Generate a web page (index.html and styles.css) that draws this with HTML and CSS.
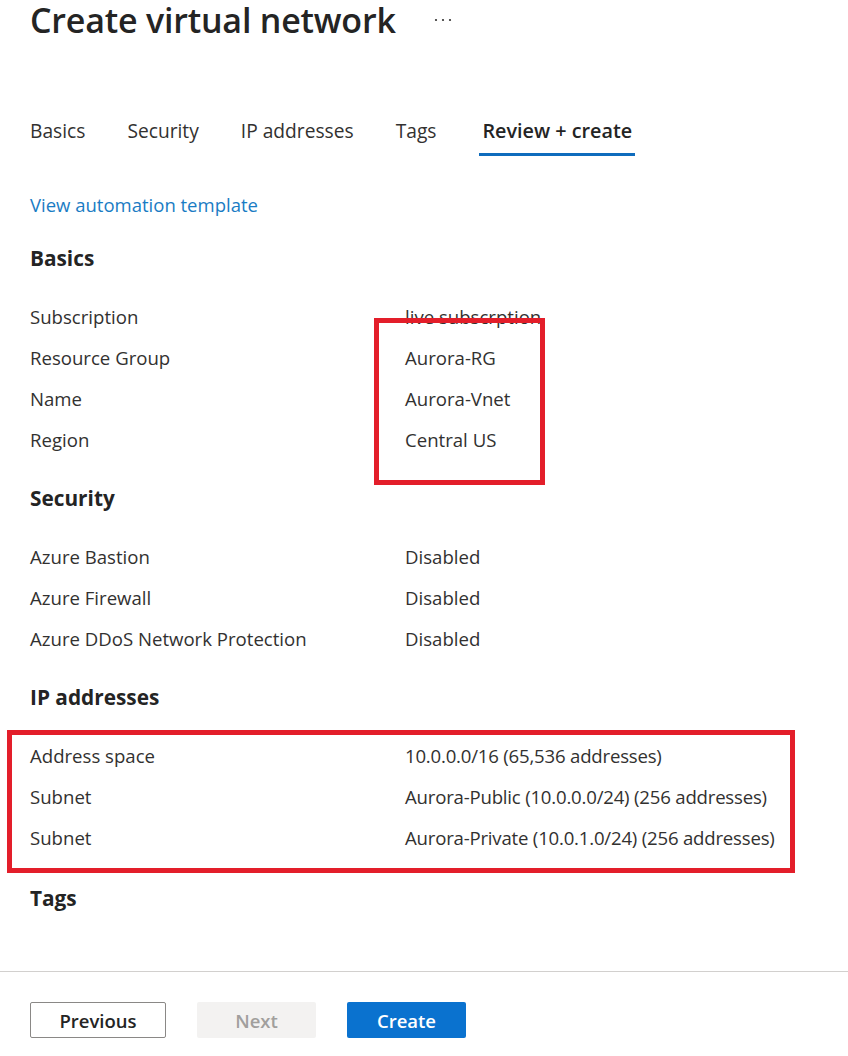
FILE: index.html
```html
<!DOCTYPE html>
<html lang="en">
<head>
<meta charset="utf-8">
<title>Create virtual network</title>
<link rel="stylesheet" href="styles.css">
</head>
<body>
<div class="page">
  <main class="main">
    <header class="title-row">
      <h1 class="title">Create virtual network</h1>
      <button class="more" aria-label="More">
        <svg width="20" height="6" viewBox="0 0 20 6"><circle cx="3" cy="3" r="1.1"/><circle cx="10" cy="3" r="1.1"/><circle cx="17" cy="3" r="1.1"/></svg>
      </button>
    </header>

    <nav class="tabs">
      <span class="tab">Basics</span>
      <span class="tab">Security</span>
      <span class="tab">IP addresses</span>
      <span class="tab">Tags</span>
      <span class="tab active">Review + create</span>
    </nav>

    <a class="link" href="#">View automation template</a>

    <section class="section">
      <h2 class="heading">Basics</h2>
      <dl class="rows">
        <dt>Subscription</dt><dd>live subscrption</dd>
        <dt>Resource Group</dt><dd>Aurora-RG</dd>
        <dt>Name</dt><dd>Aurora-Vnet</dd>
        <dt>Region</dt><dd>Central US</dd>
      </dl>
    </section>

    <section class="section">
      <h2 class="heading">Security</h2>
      <dl class="rows">
        <dt>Azure Bastion</dt><dd>Disabled</dd>
        <dt>Azure Firewall</dt><dd>Disabled</dd>
        <dt>Azure DDoS Network Protection</dt><dd>Disabled</dd>
      </dl>
    </section>

    <section class="section">
      <h2 class="heading">IP addresses</h2>
      <dl class="rows narrow">
        <dt>Address space</dt><dd>10.0.0.0/16 (65,536 addresses)</dd>
        <dt>Subnet</dt><dd>Aurora-Public (10.0.0.0/24) (256 addresses)</dd>
        <dt>Subnet</dt><dd>Aurora-Private (10.0.1.0/24) (256 addresses)</dd>
      </dl>
    </section>

    <section class="section last">
      <h2 class="heading">Tags</h2>
    </section>
  </main>

  <footer class="footer">
    <button class="btn btn-secondary">Previous</button>
    <button class="btn btn-disabled" disabled>Next</button>
    <button class="btn btn-primary">Create</button>
  </footer>

  <div class="annot annot-basics"></div>
  <div class="annot annot-ip"></div>
</div>
</body>
</html>
```

FILE: styles.css
```css
html, body {
  margin: 0;
  padding: 0;
  background: #ffffff;
}

body {
  font-family: "Open Sans", "Noto Sans", "Liberation Sans", sans-serif;
  color: #323130;
}

.page {
  position: relative;
  width: 848px;
  height: 1056px;
  overflow: hidden;
}

.main {
  padding: 0 30px;
}

.title-row {
  display: flex;
  align-items: center;
  height: 40px;
}

.title {
  margin: 0;
  font-size: 34px;
  font-weight: 600;
  line-height: 40px;
  color: #242424;
  letter-spacing: -0.2px;
}

.more {
  margin-left: 37px;
  padding: 0;
  border: 0;
  background: none;
  display: flex;
  fill: #323130;
}

.tabs {
  display: flex;
  gap: 36px;
  margin: 78px 0 0 -3px;
}

.tab {
  padding: 0 3px 9px;
  font-size: 19.2px;
  line-height: 26px;
  border-bottom: 3px solid transparent;
  color: #323130;
}

.tab.active {
  margin-left: 4px;
  font-size: 19.8px;
  font-weight: 600;
  color: #242424;
  border-bottom-color: #0f6cbd;
}

.link {
  display: block;
  margin-top: 36px;
  font-size: 18.5px;
  line-height: 26px;
  color: #1a7cc4;
  text-decoration: none;
}

.section {
  margin-top: 27px;
}

.section + .section {
  margin-top: 25px;
}

.heading {
  margin: 0;
  font-size: 20.8px;
  font-weight: 700;
  line-height: 26px;
  color: #242424;
}

.rows {
  display: grid;
  grid-template-columns: 375px 1fr;
  margin: 25px 0 0;
  font-size: 18.6px;
  line-height: 41px;
}

.rows dt,
.rows dd {
  margin: 0;
  white-space: nowrap;
}

.rows.narrow dd {
  letter-spacing: -0.2px;
}

.section.last {
  margin-top: 27px;
}

.footer {
  margin-top: 60px;
  border-top: 1px solid #d2d0ce;
  padding: 30px 30px 0;
  display: flex;
  gap: 31px;
}

.btn {
  height: 36px;
  width: 119px;
  border-radius: 2px;
  font-family: inherit;
  font-size: 18.5px;
  font-weight: 600;
  border: 1px solid transparent;
  padding: 0;
}

.btn-secondary {
  width: 136px;
  background: #ffffff;
  border-color: #8a8886;
  color: #242424;
}

.btn-disabled {
  background: #f3f2f1;
  color: #a19f9d;
}

.btn-primary {
  background: #0a72cf;
  color: #ffffff;
}

.annot {
  position: absolute;
  border: 5px solid #e31e2a;
  box-sizing: border-box;
  pointer-events: none;
}

.annot-basics {
  left: 374px;
  top: 318px;
  width: 171px;
  height: 167px;
}

.annot-ip {
  left: 7px;
  top: 730px;
  width: 788px;
  height: 143px;
}
```
